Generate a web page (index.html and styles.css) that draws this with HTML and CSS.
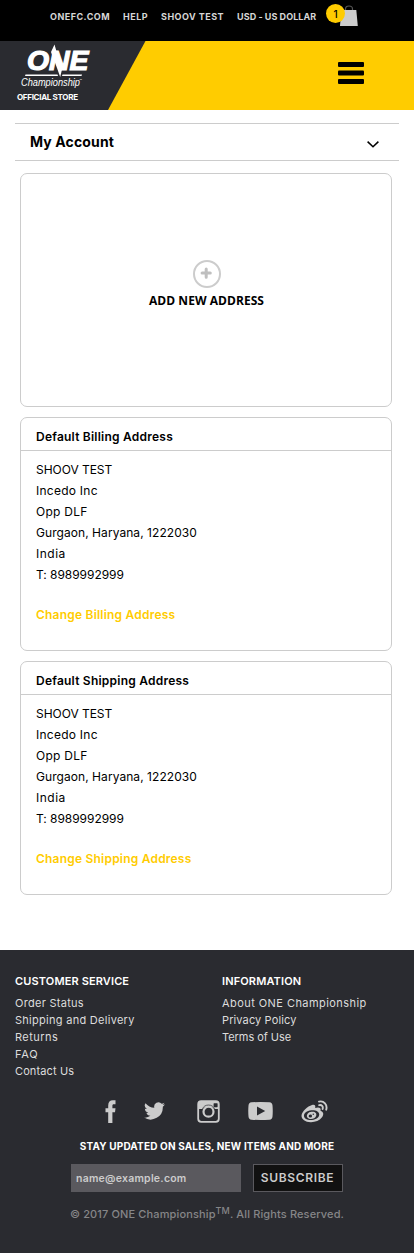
FILE: index.html
```html
<!DOCTYPE html>
<html lang="en">
<head>
<meta charset="utf-8">
<title>Address Book</title>
<link rel="stylesheet" href="styles.css">
</head>
<body>
<nav class="topbar">
  <a class="top-link">ONEFC.COM</a>
  <a class="top-link">HELP</a>
  <a class="top-link">SHOOV TEST</a>
  <a class="top-link tight">USD - US DOLLAR</a>
  <div class="cart">
    <svg class="bag" width="18" height="22" viewBox="0 0 18 22"><path d="M5.500 6V4Q5.500 1 9 1T12.500 4V6" fill="none" stroke="#555" stroke-width="1.200"/><path d="M1.200 5H16.300L17.800 21H0Z" fill="#ccc"/></svg>
    <span class="badge">1</span>
  </div>
</nav>
<header class="header">
  <svg class="brand" width="150" height="69" viewBox="0 0 150 69">
    <path d="M0 0H145.500L108 69H0Z" fill="#2a2b30"/>
    <text class="logo-one" x="27" y="28.500" textLength="61.500" lengthAdjust="spacingAndGlyphs">ONE</text>
    <path d="M51 11L54.500 3.500L57.500 14L62 28.500L60.200 36L57 27Z" fill="#fff"/>
    <path d="M25.500 33.500H57.500L58 35H25ZM62.500 33.500H82L81.500 35H62Z" fill="#fff"/>
    <text class="logo-sub" x="21" y="45" textLength="59" lengthAdjust="spacingAndGlyphs">Championship</text>
    <text class="logo-tm" x="79.500" y="41">™</text>
    <text class="logo-store" x="17" y="59" textLength="61" lengthAdjust="spacing">OFFICIAL STORE</text>
  </svg>
  <svg class="burger" width="26" height="22" viewBox="0 0 26 22"><rect width="26" height="5" rx="1"/><rect y="8.500" width="26" height="5" rx="1"/><rect y="17" width="26" height="5" rx="1"/></svg>
</header>
<main class="main">
  <section class="account-bar">
    <h1 class="account-title">My Account</h1>
    <svg class="chevron" width="12" height="7" viewBox="0 0 12 7"><path d="M.6.6L6 5.800L11.400.6" fill="none" stroke="#000" stroke-width="1.500"/></svg>
  </section>
  <div class="cards">
    <section class="card add-card">
      <svg width="28" height="28" viewBox="0 0 28 28"><circle cx="14" cy="14" r="13" fill="none" stroke="#ccc" stroke-width="2"/><path d="M13.200 9V17.200M9.100 13.100H17.300" stroke="#bfbfbf" stroke-width="3" stroke-linecap="round"/></svg>
      <span class="add-label">ADD NEW ADDRESS</span>
    </section>
    <section class="card">
      <h2 class="card-title">Default Billing Address</h2>
      <address class="address">
        <span class="snug">SHOOV TEST</span><span class="wide">Incedo Inc</span><span class="wide">Opp DLF</span><span>Gurgaon, Haryana, 1222030</span><span class="wider">India</span><span class="snug">T: 8989992999</span>
      </address>
      <a class="change">Change Billing Address</a>
    </section>
    <section class="card">
      <h2 class="card-title">Default Shipping Address</h2>
      <address class="address">
        <span class="snug">SHOOV TEST</span><span class="wide">Incedo Inc</span><span class="wide">Opp DLF</span><span>Gurgaon, Haryana, 1222030</span><span class="wider">India</span><span class="snug">T: 8989992999</span>
      </address>
      <a class="change">Change Shipping Address</a>
    </section>
  </div>
</main>
<footer class="footer">
  <div class="columns">
    <div class="column">
      <h3 class="column-title">CUSTOMER SERVICE</h3>
      <a class="wide">Order Status</a><a class="wide">Shipping and Delivery</a><a class="wider">Returns</a><a class="widest">FAQ</a><a>Contact Us</a>
    </div>
    <div class="column">
      <h3 class="column-title">INFORMATION</h3>
      <a class="wider">About ONE Championship</a><a>Privacy Policy</a><a class="snug">Terms of Use</a>
    </div>
  </div>
  <div class="social">
    <svg width="11" height="23" viewBox="0 0 11 22" preserveAspectRatio="none"><path d="M3.200 22V11.800H.5V8H3.200V5.300C3.200 2 4.900.3 7.900.3H10.500V4H8.900C7.600 4 7.400 4.600 7.400 5.700V8H10.500L10 11.800H7.400V22Z"/></svg>
    <svg width="21" height="18" viewBox="0 0 24 20"><path d="M24 2.400a9.700 9.700 0 0 1-2.800.8A5 5 0 0 0 23.300.5a9.800 9.800 0 0 1-3.100 1.200 4.900 4.900 0 0 0-8.400 4.500A14 14 0 0 1 1.700 1a4.900 4.900 0 0 0 1.500 6.600A4.900 4.900 0 0 1 1 7v.1A4.900 4.900 0 0 0 4.900 12a5 5 0 0 1-2.200.1 4.900 4.900 0 0 0 4.600 3.400A9.900 9.900 0 0 1 0 17.500 14 14 0 0 0 21.500 5.100 10 10 0 0 0 24 2.400Z"/></svg>
    <svg width="23" height="23" viewBox="0 0 23 23"><rect x="1.200" y="1.200" width="20.600" height="20.600" rx="3" fill="none" stroke="#ccc" stroke-width="1.800"/><path d="M1 9V4Q1 1 4 1H19Q22 1 22 4V9H17L15.500 7H7.500L6 9Z"/><circle cx="11.500" cy="11.700" r="5" fill="#2a2b30" stroke="#ccc" stroke-width="2.200"/><path d="M5.300 9.200A6.700 6.700 0 0 1 17.700 9.200" fill="none" stroke="#2a2b30" stroke-width=".7"/><rect x="16.600" y="3.200" width="4" height="4" rx=".6" fill="#2a2b30"/></svg>
    <svg width="25" height="18" viewBox="0 0 25 18"><path fill-rule="evenodd" d="M3.500.3Q12.500-.3 21.500.3Q24.300.6 24.500 3.500Q25 9 24.500 14.500Q24.300 17.400 21.500 17.700Q12.500 18.300 3.500 17.700Q.7 17.400.5 14.500Q0 9 .5 3.500Q.7.6 3.500.3ZM9 4.500V13.500L17.200 9Z"/></svg>
    <svg width="27" height="23" viewBox="0 0 27 23"><path fill-rule="evenodd" d="M11 5C13.500 4.200 14.800 5.400 14.200 8C17.500 6.700 20.600 7.600 19.500 10.800C22.300 11.700 23.300 14.300 21 17.300C18.500 20.700 14 22.300 9.700 22.200C4.400 22 .4 19.300.5 15.700C.7 11.400 6.700 6.300 11 5ZM10.300 10.300C5.800 10.700 2.800 13.200 3 16C3.300 18.800 6.800 20.400 11 20C15.400 19.600 18.500 17 18.200 14.200C17.900 11.500 14.600 9.900 10.300 10.300Z"/><path fill-rule="evenodd" d="M10.500 11.800C14 11.200 16 13.400 15.200 15.700C14.300 18.400 10.700 19.700 8 18.700C5.600 17.800 5.200 15.500 6.600 13.700C7.500 12.600 8.900 12 10.500 11.800ZM9.300 14.600A1.700 1.500 0 1 0 9.400 17.600A1.700 1.500 0 1 0 9.300 14.600ZM12.200 13.500A.7.700 0 1 0 12.300 14.900A.7.700 0 1 0 12.200 13.500Z"/><path d="M18 1.600C22.800.4 26.700 4.700 25.200 9.700M18.200 5.200C20.700 4.600 22.400 6.500 21.600 9" fill="none" stroke="#ccc" stroke-width="1.900" stroke-linecap="round"/></svg>
  </div>
  <p class="stay">STAY UPDATED ON SALES, NEW ITEMS AND MORE</p>
  <form class="signup">
    <input class="email" type="email" placeholder="name@example.com">
    <button class="subscribe" type="button">SUBSCRIBE</button>
  </form>
  <p class="copy">© 2017 ONE Championship<sup>TM</sup>. All Rights Reserved.</p>
</footer>
</body>
</html>
```
FILE: styles.css
```css
* { box-sizing: border-box; }
body { margin: 0; font-family: Inter, "Liberation Sans", sans-serif; font-size: 12px; color: #000; background: #fff; }
h1, h2, h3, p { margin: 0; }
svg { display: block; flex: none; }

.topbar { display: flex; height: 41px; background: #000; padding-left: 50px; gap: 13px; color: #d6d6d6; }
.top-link { font-size: 9px; font-weight: 700; line-height: 34px; letter-spacing: .47px; white-space: nowrap; }
.top-link.tight { letter-spacing: .05px; }
.cart { position: relative; padding: 5px 0 0 11px; }
.badge { position: absolute; left: -3px; top: 4px; width: 19px; height: 19px; border-radius: 50%; background: #fc0; color: #000; font-size: 10px; font-weight: 500; line-height: 20px; text-align: center; }

.header { display: flex; justify-content: space-between; height: 69px; padding-right: 50px; background: #fc0; }
.burger { margin-top: 21px; }
.logo-one { font: italic 700 27px "Liberation Sans", sans-serif; fill: #fff; stroke: #fff; stroke-width: 1.2px; }
.logo-sub { font: italic 10px "Liberation Sans", sans-serif; fill: #fff; }
.logo-tm { font-size: 4px; fill: #fff; }
.logo-store { font-size: 8px; font-weight: 700; fill: #fff; }

.main { padding: 13px 15px 55px; }
.account-bar { display: flex; justify-content: space-between; height: 38px; border: solid #ccc; border-width: 1px 0; padding: 0 20px 0 15px; }
.account-title { font-size: 14px; font-weight: 700; letter-spacing: .13px; line-height: 35px; }
.chevron { margin-top: 17px; }

.cards { display: flex; flex-direction: column; gap: 10px; padding: 12px 7px 0 5px; }
.card { height: 234px; border: 1px solid #ccc; border-radius: 7px; }
.add-card { display: flex; flex-direction: column; align-items: center; padding: 86px 0 0 1px; }
.add-label { font: 700 12px/17px "Open Sans", sans-serif; margin-top: 4px; letter-spacing: .05px; }
.card-title { height: 33px; border-bottom: 1px solid #ccc; padding-left: 15px; font-size: 12px; font-weight: 600; line-height: 37px; letter-spacing: .23px; }
.address { display: flex; flex-direction: column; padding: 8px 15px 0; font-style: normal; line-height: 21px; letter-spacing: .06px; }
.address .snug { letter-spacing: -.04px; }
.address .wide { letter-spacing: .25px; }
.address .wider { letter-spacing: .5px; }
.change { display: block; padding: 19px 15px 0; font-weight: 600; line-height: 21px; letter-spacing: .21px; color: #fc0; }

.footer { height: 303px; background: #2a2b30; color: #ddd; padding-top: 22px; }
.columns { display: grid; grid-template-columns: 1fr 1fr; height: 127px; }
.column { display: flex; flex-direction: column; padding-left: 15px; font-size: 11px; line-height: 17px; letter-spacing: .12px; }
.column-title { font-size: 11px; font-weight: 600; line-height: 19px; margin-bottom: 4px; color: #fff; letter-spacing: .13px; }
.column .snug { letter-spacing: -.05px; }
.column .wide { letter-spacing: .28px; }
.column .wider { letter-spacing: .44px; }
.column .widest { letter-spacing: .75px; }
.social { display: flex; justify-content: center; align-items: center; height: 24px; gap: 28px; padding-left: 18px; fill: #ccc; }
.social svg:nth-child(3) { margin-left: 4px; }
.stay { margin-top: 14px; font-size: 10px; font-weight: 700; line-height: 18px; letter-spacing: .155px; text-align: center; color: #fff; }
.signup { display: flex; justify-content: center; gap: 12px; height: 28px; margin-top: 9px; }
.email { width: 170px; height: 28px; border: 0; padding: 0 5px; background: #5a595e; font: 600 10.500px Inter, sans-serif; letter-spacing: .23px; }
.email::placeholder { color: #ccc; opacity: 1; }
.subscribe { width: 90px; height: 28px; border: 1px solid #5a595e; padding: 0 1px 1px 0; background: #111; color: #ccc; font: 600 12px Inter, sans-serif; letter-spacing: .66px; }
.copy { margin-top: 13px; font-size: 11px; font-weight: 500; line-height: 18px; letter-spacing: .13px; text-align: center; color: #868688; }
.copy sup { font-size: 9px; line-height: 0; vertical-align: 4px; }
```
